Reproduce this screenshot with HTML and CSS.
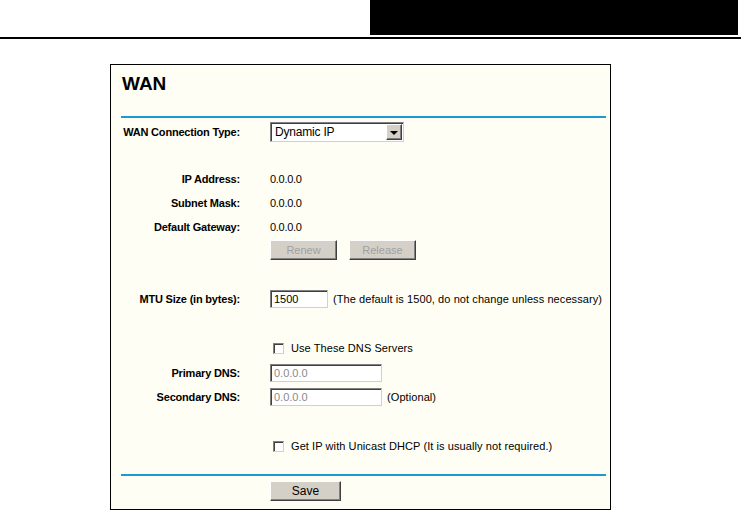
FILE: index.html
```html
<!DOCTYPE html>
<html lang="en">
<head>
  <meta charset="UTF-8" />
  <title>WAN</title>
  <link rel="stylesheet" href="styles.css">
</head>
<body>
  <!-- page header -->
  <div class="top">
    <div class="top-block"></div>
  </div>

  <div class="panel">
    <h1>WAN</h1>
    <div class="rule"></div>

    <div class="row first">
      <label class="lbl">WAN Connection Type:</label>
      <div class="select">
        <span class="select-text">Dynamic IP</span>
        <span class="select-btn"><span class="tri"></span></span>
      </div>
    </div>

    <div class="row info first-info">
      <span class="lbl">IP Address:</span>
      <span class="val">0.0.0.0</span>
    </div>
    <div class="row info">
      <span class="lbl">Subnet Mask:</span>
      <span class="val">0.0.0.0</span>
    </div>
    <div class="row info">
      <span class="lbl">Default Gateway:</span>
      <span class="val">0.0.0.0</span>
    </div>
    <div class="row btns">
      <span class="lbl"></span>
      <button class="btn off" disabled>Renew</button>
      <button class="btn off" disabled>Release</button>
    </div>

    <div class="row mtu">
      <label class="lbl">MTU Size (in bytes):</label>
      <input class="field short" type="text" value="1500">
      <span class="note">(The default is 1500, do not change unless necessary)</span>
    </div>

    <div class="row check dns-check">
      <span class="lbl"></span>
      <span class="box"></span>
      <span class="note">Use These DNS Servers</span>
    </div>
    <div class="row dns first-dns">
      <label class="lbl">Primary DNS:</label>
      <input class="field wide grey" type="text" value="0.0.0.0">
    </div>
    <div class="row dns">
      <label class="lbl">Secondary DNS:</label>
      <input class="field wide grey" type="text" value="0.0.0.0">
      <span class="note">(Optional)</span>
    </div>

    <div class="row check unicast">
      <span class="lbl"></span>
      <span class="box"></span>
      <span class="note">Get IP with Unicast DHCP (It is usually not required.)</span>
    </div>

    <div class="rule bottom"></div>

    <div class="row save-row">
      <span class="lbl"></span>
      <button class="btn save">Save</button>
    </div>
  </div>
</body>
</html>
```

FILE: styles.css
```css
body {
  margin: 0;
  font-family: "Liberation Sans", Arial, sans-serif;
  font-size: 11px;
  color: #000;
  background: #fff;
}
.top {
  height: 37px;
  border-bottom: 2px solid #000;
}
.top-block {
  margin-left: 370px;
  width: 368px;
  height: 35px;
  background: #000;
}
.panel {
  margin: 25px 0 0 110px;
  width: 485px;
  border: 1px solid #000;
  background: #fefef4;
  padding: 0 4px 8px 10px;
}
h1 {
  margin: 8px 0 0 1px;
  font-size: 19px;
  line-height: 22px;
  font-weight: bold;
}
.rule {
  margin-top: 21px;
  height: 2px;
  background: #1b9ad2;
}
.rule.bottom {
  margin-top: 16px;
}
.row {
  display: flex;
  align-items: center;
  height: 24px;
}
.row.first {
  margin-top: 4px;
  height: 20px;
}
.lbl {
  width: 119px;
  margin-right: 30px;
  flex: none;
  text-align: right;
  font-weight: bold;
  letter-spacing: -0.2px;
}
.val {
  letter-spacing: -0.3px;
}
.note {
  letter-spacing: 0.08px;
  white-space: nowrap;
}
.info.first-info {
  margin-top: 25px;
}
.row.btns {
  height: 22px;
}
.row.mtu {
  margin-top: 26px;
}
.row.dns-check {
  margin-top: 25px;
}
.row.first-dns {
  margin-top: 1px;
}
.row.unicast {
  margin-top: 25px;
}
.row.save-row {
  margin-top: 5px;
  height: 20px;
}

/* windows classic controls */
.select {
  display: flex;
  align-items: center;
  width: 130px;
  height: 16px;
  padding: 1px;
  background: #fff;
  border: 1px solid;
  border-color: #808080 #d4d0c8 #d4d0c8 #808080;
  box-shadow: inset 1px 1px #404040;
}
.select-text {
  flex: 1;
  padding-left: 3px;
  font-size: 12px;
  letter-spacing: -0.2px;
}
.select-btn {
  width: 16px;
  height: 16px;
  display: flex;
  align-items: center;
  justify-content: center;
  background: #d4d0c8;
  border: 1px solid;
  border-color: #fff #404040 #404040 #fff;
  box-shadow: inset -1px -1px #808080;
  box-sizing: border-box;
}
.tri {
  width: 0;
  height: 0;
  border-left: 4px solid transparent;
  border-right: 4px solid transparent;
  border-top: 4px solid #000;
  margin-top: 1px;
}
.btn {
  font-family: "Liberation Sans", Arial, sans-serif;
  font-size: 11px;
  height: 20px;
  padding: 0;
  background: #d4d0c8;
  border: 1px solid;
  border-color: #fff #404040 #404040 #fff;
  box-shadow: inset -1px -1px #808080;
}
.btn.off {
  width: 67px;
  color: #a0a0a0;
  margin-right: 12px;
}
.btn.save {
  width: 71px;
  color: #000;
  font-size: 12px;
}
.field {
  height: 18px;
  box-sizing: border-box;
  padding: 0 3px;
  font-family: "Liberation Sans", Arial, sans-serif;
  font-size: 11px;
  background: #fff;
  border: 1px solid;
  border-color: #808080 #d4d0c8 #d4d0c8 #808080;
  box-shadow: inset 1px 1px #404040;
  outline: none;
}
.field.short {
  width: 58px;
  margin-right: 5px;
}
.field.wide {
  width: 112px;
  margin-right: 5px;
}
.field.grey {
  color: #8a8a8a;
}
.box {
  width: 9px;
  height: 9px;
  margin: 0 7px 0 3px;
  background: #fff;
  border: 1px solid;
  border-color: #808080 #d4d0c8 #d4d0c8 #808080;
  box-shadow: inset 1px 1px #404040;
}
```
